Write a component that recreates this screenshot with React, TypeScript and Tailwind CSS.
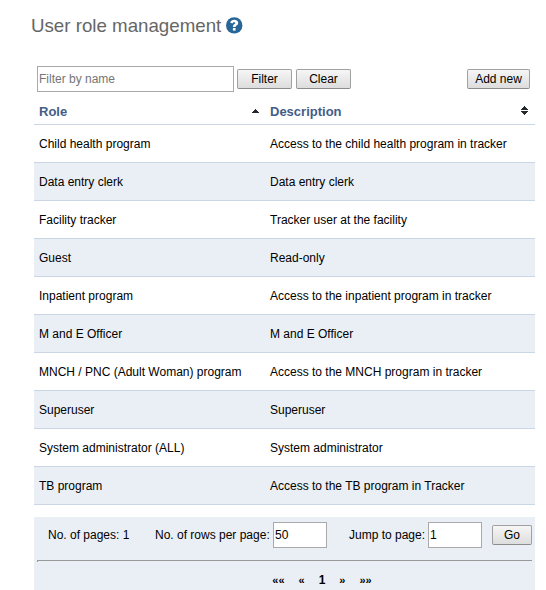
import React from 'react';

const roles: [string, string][] = [
  ['Child health program', 'Access to the child health program in tracker'],
  ['Data entry clerk', 'Data entry clerk'],
  ['Facility tracker', 'Tracker user at the facility'],
  ['Guest', 'Read-only'],
  ['Inpatient program', 'Access to the inpatient program in tracker'],
  ['M and E Officer', 'M and E Officer'],
  ['MNCH / PNC (Adult Woman) program', 'Access to the MNCH program in tracker'],
  ['Superuser', 'Superuser'],
  ['System administrator (ALL)', 'System administrator'],
  ['TB program', 'Access to the TB program in Tracker'],
];

function Button({ children, className }: { children: React.ReactNode; className: string }) {
  return (
    <button
      className={`h-5 shrink-0 rounded-[2px] border border-[#a0a0a0] border-b-[#8c8c8c] bg-linear-to-b from-[#f6f6f6] to-[#dddddd] text-center leading-[18px] ${className}`}
    >
      {children}
    </button>
  );
}

function HelpIcon() {
  return (
    <svg className="ml-[5px] h-[17px] w-[17px]" viewBox="0 0 17 17">
      <circle cx="8.2" cy="8.4" r="8.2" fill="#276696" />
      <path
        d="M4.1 5.4C4.9 3.7 6.3 2.8 8.3 2.8c2.3 0 3.9 1.3 3.9 3.1 0 2.4-2.6 2.5-2.6 4H6.9c0-2.6 2.4-2.7 2.4-3.8 0-.6-.5-.9-1.1-.9-.8 0-1.3.5-1.8 1.4Z"
        fill="#fff"
      />
      <path d="M6.9 11h2.7v2.6H6.9z" fill="#fff" />
    </svg>
  );
}

const field = 'h-[26px] shrink-0 border border-[#a9a9a9] bg-white px-px outline-none';

export default function App() {
  return (
    <div className="h-[590px] w-[546px] overflow-hidden bg-white font-['Liberation_Sans',Arial,sans-serif] text-[12px] text-black">
      <h3 className="flex h-[66px] items-start pl-[31px] pt-[15px] text-[18.72px] leading-[22px] text-[#666]">
        <span>User role management</span>
        <span className="pt-[2px]"><HelpIcon /></span>
      </h3>

      <div className="ml-[34px] w-[501px]">
        <div className="flex h-[26px] items-center pl-[3px] pr-[5px]">
          <input className={`${field} w-[197px] placeholder:text-[#757575]`} placeholder="Filter by name" />
          <Button className="ml-[3px] w-[55px]">Filter</Button>
          <Button className="ml-1 w-[55px]">Clear</Button>
          <Button className="ml-auto w-[63px]">Add new</Button>
        </div>

        <div className="flex h-[33px] border-b border-[#cad5e5] pt-3 text-[13px] font-bold leading-[15px] text-[#435d87]">
          <div className="flex w-[231px] justify-between pl-[5px] pr-[6px]">
            <span>Role</span>
            <svg className="mt-[5px] h-1 w-[7px]" viewBox="0 0 7 4" shapeRendering="crispEdges">
              <path d="M3 0h1v1h1v1h1v1h1v1H0V3h1V2h1V1h1Z" fill="#23292d" />
            </svg>
          </div>
          <div className="flex grow justify-between pl-[5px] pr-[7px]">
            <span>Description</span>
            <svg className="mt-[2px] h-[9px] w-[7px]" viewBox="0 0 7 9" shapeRendering="crispEdges">
              <path d="M3 0h1v1h1v1h1v1h1v1H0V3h1V2h1V1h1Z M0 5h7v1H6v1H5v1H4v1H3V8H2V7H1V6H0Z" fill="#23292d" />
            </svg>
          </div>
        </div>

        {roles.map(([role, description], i) => (
          <div
            key={role}
            className={`flex h-[38px] items-center border-b border-[#cad5e5] ${i % 2 ? 'bg-[#eaeff6]' : 'bg-white'}`}
          >
            <div className="w-[231px] pl-[5px]">{role}</div>
            <div className="pl-[5px]">{description}</div>
          </div>
        ))}

        <div className="mt-3 h-[73px] bg-[#eaeff6] pl-[3px] pr-[3px] pt-[5px]">
          <div className="flex h-[26px] items-center">
            <span className="w-[107px] pl-[11px]">No. of pages: 1</span>
            <span className="w-[129px] whitespace-nowrap pl-[11px]">No. of rows per page:</span>
            <input className={`${field} w-[54px]`} defaultValue="50" />
            <span className="ml-[22px] w-[79px] whitespace-nowrap">Jump to page:</span>
            <input className={`${field} w-[54px]`} defaultValue="1" />
            <Button className="ml-auto w-10">Go</Button>
          </div>
          <div className="mt-3 h-[2px] border-l border-t border-[#999]" />
          <div className="flex justify-center gap-[14px] pl-[75px] pt-[10px] text-[11px] font-bold leading-[16px]">
            <span>««</span>
            <span>«</span>
            <span className="text-[12px]">1</span>
            <span>»</span>
            <span>»»</span>
          </div>
        </div>
      </div>
    </div>
  );
}
